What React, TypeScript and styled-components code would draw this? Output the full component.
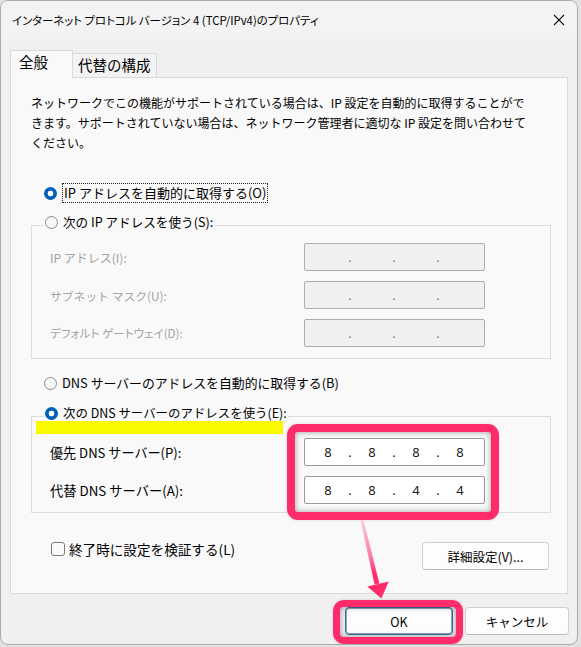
import React from "react";
import styled, { createGlobalStyle, css } from "styled-components";

const GlobalStyle = createGlobalStyle`
  html, body { margin: 0; padding: 0; }
  body {
    background: #e2e2e2;
    width: 581px;
    height: 647px;
    overflow: hidden;
    font-family: "Noto Sans CJK JP", "Noto Sans", sans-serif;
  }
`;

const Window = styled.div`
  position: relative;
  box-sizing: border-box;
  width: 578px;
  height: 645px;
  background: #f0f0f0;
  border: 1px solid #ababab;
  border-radius: 8px;
  overflow: hidden;
  display: flex;
  flex-direction: column;
  font-size: 12px;
  color: #000;
`;

const TitleBar = styled.div`
  height: 38px;
  display: flex;
  align-items: center;
  justify-content: space-between;
  padding-left: 11px;
  background: #f3f3f3;
`;

const Title = styled.span`
  font-size: 11.4px;
  line-height: 16px;
  white-space: nowrap;
  font-feature-settings: "palt";
`;

const CloseButton = styled.div`
  width: 36px;
  height: 38px;
  display: flex;
  align-items: center;
  justify-content: center;
`;

const Content = styled.div`
  padding: 0 9px;
  display: flex;
  flex-direction: column;
`;

const TabRow = styled.div`
  margin-top: 11px;
  margin-bottom: -1px;
  display: flex;
  align-items: flex-end;
  position: relative;
  z-index: 1;
`;

const Tab = styled.div<{ $active?: boolean }>`
  box-sizing: border-box;
  display: flex;
  align-items: center;
  font-size: 14.5px;
  line-height: 18px;
  border: 1px solid #d9d9d9;
  border-bottom: none;
  ${(p) =>
    p.$active
      ? css`
          width: 63px;
          height: 28px;
          background: #f9f9f9;
          padding: 0 0 5px 8px;
        `
      : css`
          width: 84px;
          height: 24px;
          margin-bottom: 1px;
          border-left: none;
          background: #f3f3f3;
          padding: 0 0 2px 5px;
        `}
`;

const Panel = styled.div`
  box-sizing: border-box;
  height: 517px;
  border: 1px solid #d9d9d9;
  background: #f9f9f9;
  padding: 15px 16px 0 20px;
  display: flex;
  flex-direction: column;
`;

const Description = styled.p`
  margin: 0;
  line-height: 20px;
  white-space: nowrap;
`;

const Text = styled.span<{ $size?: number; $palt?: boolean; $disabled?: boolean }>`
  font-size: ${(p) => p.$size ?? 12}px;
  white-space: nowrap;
  color: ${(p) => (p.$disabled ? "#a3a3a3" : "#000")};
  ${(p) =>
    p.$palt &&
    css`
      font-feature-settings: "palt";
    `}
`;

const RadioRow = styled.div<{ $top: number }>`
  display: flex;
  align-items: center;
  gap: 5px;
  height: 20px;
  margin-top: ${(p) => p.$top}px;
  padding-left: 13px;
  line-height: 20px;
`;

const Radio = styled.span<{ $checked?: boolean }>`
  box-sizing: border-box;
  flex: none;
  width: 13px;
  height: 13px;
  border-radius: 50%;
  ${(p) =>
    p.$checked
      ? css`
          background: radial-gradient(circle, #ffffff 0 2.6px, #005fb8 3.2px);
        `
      : css`
          border: 1px solid #8a8a8a;
          background: #f7f7f7;
        `}
`;

const FocusLabel = styled.span`
  box-sizing: border-box;
  height: 20px;
  line-height: 18px;
  padding: 0 1px;
  border: 1px dotted #222;
  display: flex;
  align-items: center;
`;

const Group = styled.fieldset<{ $top: number; $pt: number; $pb: number }>`
  margin: ${(p) => p.$top}px 0 0 0;
  padding: ${(p) => p.$pt}px 0 ${(p) => p.$pb}px 18px;
  border: 1px solid #dcdcdc;
  min-width: 0;
  display: flex;
  flex-direction: column;
  gap: 10px;
`;

const Legend = styled.legend`
  margin-left: -6px;
  padding: 0 1px 6px 1px;
  display: flex;
  align-items: center;
  gap: 5px;
  line-height: 20px;
  height: 26px;
  box-sizing: border-box;
`;

const FieldRow = styled.div`
  display: grid;
  grid-template-columns: 254px 181px;
  align-items: center;
  height: 28px;
`;

const IpBox = styled.div<{ $disabled?: boolean }>`
  box-sizing: border-box;
  width: 181px;
  height: 28px;
  border: 1px solid ${(p) => (p.$disabled ? "#adadad" : "#9a9a9a")};
  border-radius: 2px;
  background: ${(p) => (p.$disabled ? "#f0f0f0" : "#ffffff")};
  display: grid;
  grid-template-columns: 36px 8px 36px 8px 36px 8px 36px;
  padding-left: 5px;
  align-items: center;
  font-family: "Noto Sans", sans-serif;
  font-size: 13px;
  line-height: 26px;
  color: ${(p) => (p.$disabled ? "#6b7a8a" : "#1a1a1a")};
`;

const Seg = styled.span`
  text-align: center;
`;

const Dot = styled.span`
  text-align: center;
`;

const BottomRow = styled.div`
  margin-top: 29px;
  display: flex;
  align-items: center;
  justify-content: space-between;
  padding: 0 2px 0 20px;
`;

const CheckRow = styled.div`
  display: flex;
  align-items: center;
  gap: 4px;
  margin-top: -14px;
`;

const CheckBox = styled.span`
  box-sizing: border-box;
  width: 14px;
  height: 14px;
  border: 1px solid #7a7a7a;
  border-radius: 3px;
  background: #fbfbfb;
`;

const Button = styled.button<{ $w: number; $default?: boolean }>`
  box-sizing: border-box;
  width: ${(p) => p.$w}px;
  height: 28px;
  font-family: "Noto Sans CJK JP", "Noto Sans", sans-serif;
  font-size: 12.5px;
  color: #000;
  background: #fdfdfd;
  border: 1px solid #d0d0d0;
  border-bottom-color: #bcbcbc;
  border-radius: 4px;
  padding: 0;
  ${(p) =>
    p.$default &&
    css`
      border: 1px solid #3d6a94;
      box-shadow: inset 0 0 0 1px #8fa8c0;
    `}
`;

const Footer = styled.div`
  margin-top: 13px;
  margin-right: -1px;
  display: flex;
  justify-content: flex-end;
  gap: 12px;
`;

const Highlight = styled.div<{ $l: number; $t: number; $w: number; $h: number; $b: number }>`
  position: absolute;
  box-sizing: border-box;
  left: ${(p) => p.$l}px;
  top: ${(p) => p.$t}px;
  width: ${(p) => p.$w}px;
  height: ${(p) => p.$h}px;
  border: ${(p) => p.$b}px solid #ff2c6b;
  border-radius: 11px;
  box-shadow: inset 0 0 5px 1px rgba(0, 0, 0, 0.28), 0 0 3px rgba(0, 0, 0, 0.15);
  pointer-events: none;
  z-index: 5;
`;

const Marker = styled.div`
  position: absolute;
  left: 35px;
  top: 420px;
  width: 247px;
  height: 13px;
  background: #f9f900;
  z-index: 4;
`;

const ArrowSvg = styled.svg`
  position: absolute;
  left: 349px;
  top: 514px;
  z-index: 6;
  overflow: visible;
`;

const IpField: React.FC<{ values?: string[]; disabled?: boolean }> = ({ values, disabled }) => {
  const v = values ?? ["", "", "", ""];
  return (
    <IpBox $disabled={disabled}>
      <Seg>{v[0]}</Seg>
      <Dot>.</Dot>
      <Seg>{v[1]}</Seg>
      <Dot>.</Dot>
      <Seg>{v[2]}</Seg>
      <Dot>.</Dot>
      <Seg>{v[3]}</Seg>
    </IpBox>
  );
};

export default function App() {
  return (
    <>
      <GlobalStyle />
      <Window>
        <TitleBar>
          <Title>インターネット プロトコル バージョン 4 (TCP/IPv4)のプロパティ</Title>
          <CloseButton>
            <svg width="12" height="12" viewBox="0 0 12 12">
              <path d="M1 1 L11 11 M11 1 L1 11" stroke="#111" strokeWidth="1.1" fill="none" />
            </svg>
          </CloseButton>
        </TitleBar>
        <Content>
          <TabRow>
            <Tab $active>全般</Tab>
            <Tab>代替の構成</Tab>
          </TabRow>
          <Panel>
            <Description>
              ネットワークでこの機能がサポートされている場合は、IP 設定を自動的に取得することがで
              <br />
              きます。サポートされていない場合は、ネットワーク管理者に適切な IP 設定を問い合わせて
              <br />
              ください。
            </Description>
            <RadioRow $top={30}>
              <Radio $checked />
              <FocusLabel>
                <Text $size={13}>IP アドレスを自動的に取得する(O)</Text>
              </FocusLabel>
            </RadioRow>
            <Group $top={9} $pt={5} $pb={11}>
              <Legend>
                <Radio />
                <Text $size={12.6}>次の IP アドレスを使う(S):</Text>
              </Legend>
              <FieldRow>
                <Text $disabled>IP アドレス(I):</Text>
                <IpField disabled />
              </FieldRow>
              <FieldRow>
                <Text $disabled $size={11.8}>
                  サブネット マスク(U):
                </Text>
                <IpField disabled />
              </FieldRow>
              <FieldRow>
                <Text $disabled $palt $size={11.6}>
                  デフォルト ゲートウェイ(D):
                </Text>
                <IpField disabled />
              </FieldRow>
            </Group>
            <RadioRow $top={14}>
              <Radio />
              <Text $size={12.85}>DNS サーバーのアドレスを自動的に取得する(B)</Text>
            </RadioRow>
            <Group $top={10} $pt={9} $pb={8}>
              <Legend>
                <Radio $checked />
                <Text $size={12.45}>次の DNS サーバーのアドレスを使う(E):</Text>
              </Legend>
              <FieldRow>
                <Text $size={13.1}>優先 DNS サーバー(P):</Text>
                <IpField values={["8", "8", "8", "8"]} />
              </FieldRow>
              <FieldRow>
                <Text $size={13.3}>代替 DNS サーバー(A):</Text>
                <IpField values={["8", "8", "4", "4"]} />
              </FieldRow>
            </Group>
            <BottomRow>
              <CheckRow>
                <CheckBox />
                <Text $size={13.6}>終了時に設定を検証する(L)</Text>
              </CheckRow>
              <Button $w={127}>詳細設定(V)...</Button>
            </BottomRow>
          </Panel>
          <Footer>
            <Button $w={108} $default>
              OK
            </Button>
            <Button $w={104}>キャンセル</Button>
          </Footer>
        </Content>

        <Marker />
        <Highlight $l={286} $t={423} $w={212} $h={96} $b={8} />
        <Highlight $l={332} $t={599} $w={130} $h={44} $b={7} />
        <ArrowSvg width="46" height="90" viewBox="0 0 46 90">
          <defs>
            <linearGradient id="arrowGrad" x1="0" y1="0" x2="0" y2="1">
              <stop offset="0" stopColor="#fbd0dd" />
              <stop offset="0.55" stopColor="#fb7ea3" />
              <stop offset="0.85" stopColor="#ff2c6b" />
              <stop offset="1" stopColor="#ff2c6b" />
            </linearGradient>
          </defs>
          <polygon points="10.5,5.3 13.5,4.7 29.4,68.4 24.6,69.6" fill="url(#arrowGrad)" />
          <polygon points="17.3,71.5 38.7,66.5 31.4,83.6" fill="#ff2c6b" />
        </ArrowSvg>
      </Window>
    </>
  );
}
